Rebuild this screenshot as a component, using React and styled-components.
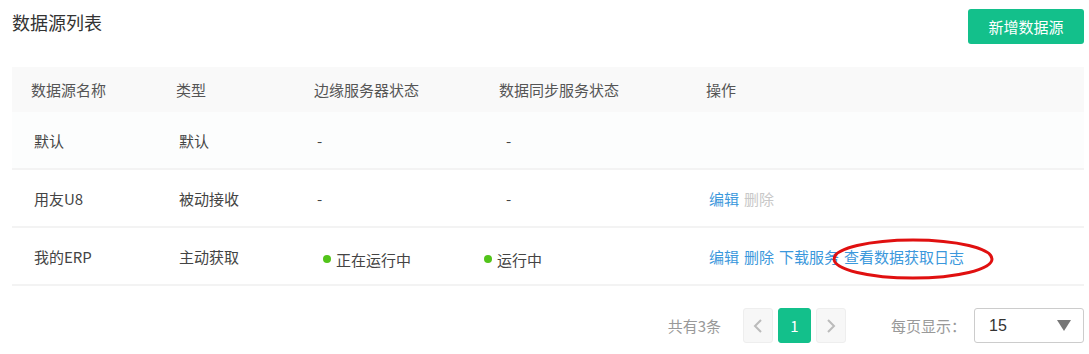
import React from 'react'
import styled, { createGlobalStyle } from 'styled-components'

const GlobalStyle = createGlobalStyle`
  body {
    margin: 0;
    background: #fff;
    font-family: "Noto Sans CJK SC", "Noto Sans", "Liberation Sans", sans-serif;
  }
`

const Page = styled.div`
  position: relative;
  width: 1089px;
  height: 354px;
  padding: 9px 5px 0 12px;
  box-sizing: border-box;
`

const TopBar = styled.div`
  display: flex;
  justify-content: space-between;
  align-items: flex-start;
  height: 35px;
`

const Title = styled.h2`
  margin: 0;
  font-size: 18px;
  font-weight: 400;
  line-height: 26px;
  color: #333;
`

const AddButton = styled.button`
  width: 116px;
  height: 35px;
  border: none;
  border-radius: 3px;
  background: #13c08b;
  color: #fff;
  font-family: inherit;
  font-size: 15px;
  cursor: pointer;
`

const Table = styled.div`
  margin-top: 23px;
`

const Row = styled.div`
  display: grid;
  grid-template-columns: 145px 138px 185px 207px 1fr;
  align-items: center;
  box-sizing: border-box;
  height: ${p => (p.$head ? '45px' : '58px')};
  background: ${p => (p.$head ? '#f9f9f9' : p.$tint ? '#fcfdfd' : '#fff')};
  border-bottom: ${p => (p.$head ? 'none' : '2px solid #f3f3f3')};
  font-size: 15px;
  color: ${p => (p.$head ? '#555' : '#444')};
`

const Cell = styled.div`
  padding-left: ${p => (p.$pad != null ? p.$pad : p.$head ? 19 : 22)}px;
  padding-top: ${p => (p.$low ? '6px' : '0')};
  white-space: nowrap;
  display: flex;
  align-items: center;
`

const Dot = styled.span`
  width: 8px;
  height: 8px;
  border-radius: 50%;
  background: #52c41a;
  margin: 0 5px 0 ${p => p.$offset || 0}px;
`

const Link = styled.a`
  color: ${p => (p.$disabled ? '#c8c8c8' : '#3b98dc')};
  margin-right: 5px;
  cursor: pointer;
`

const Mark = styled.svg`
  position: absolute;
  left: 830px;
  top: 236px;
  pointer-events: none;
`

const Pager = styled.div`
  display: flex;
  justify-content: flex-end;
  align-items: center;
  margin-top: 22px;
  font-size: 15px;
  color: #999;
`

const Total = styled.span`
  margin-right: 22px;
`

const PageBtn = styled.div`
  width: ${p => (p.$active ? '33px' : '30px')};
  height: 35px;
  margin-left: ${p => (p.$first ? 0 : 5)}px;
  box-sizing: border-box;
  border: 1px solid ${p => (p.$active ? '#13c08b' : '#eee')};
  border-radius: 3px;
  background: ${p => (p.$active ? '#13c08b' : '#f7f7f7')};
  color: ${p => (p.$active ? '#fff' : '#bbb')};
  display: flex;
  align-items: center;
  justify-content: center;
  font-size: 15px;
`

const SizeLabel = styled.span`
  margin-left: 45px;
  margin-right: 8px;
`

const Select = styled.div`
  width: 110px;
  height: 35px;
  box-sizing: border-box;
  border: 1px solid #ccc;
  border-radius: 3px;
  display: flex;
  align-items: center;
  justify-content: space-between;
  padding: 0 12px 0 14px;
  color: #333;
  font-family: "Liberation Sans", Arial, sans-serif;
  font-size: 16px;
`

const Caret = styled.span`
  width: 0;
  height: 0;
  border-left: 7px solid transparent;
  border-right: 7px solid transparent;
  border-top: 11px solid #777;
`

const Chevron = ({ dir }) => (
  <svg width="10" height="16" viewBox="0 0 10 16">
    <path
      d={dir === 'left' ? 'M8 2 L2 8 L8 14' : 'M2 2 L8 8 L2 14'}
      fill="none"
      stroke="#bbb"
      strokeWidth="2"
    />
  </svg>
)

export default function App() {
  return (
    <Page>
      <GlobalStyle />
      <TopBar>
        <Title>数据源列表</Title>
        <AddButton>新增数据源</AddButton>
      </TopBar>
      <Table>
        <Row $head>
          <Cell $head>数据源名称</Cell>
          <Cell $head>类型</Cell>
          <Cell $head>边缘服务器状态</Cell>
          <Cell $head>数据同步服务状态</Cell>
          <Cell $head>操作</Cell>
        </Row>
        <Row $tint>
          <Cell>默认</Cell>
          <Cell>默认</Cell>
          <Cell>-</Cell>
          <Cell $pad={26}>-</Cell>
          <Cell />
        </Row>
        <Row>
          <Cell>用友U8</Cell>
          <Cell>被动接收</Cell>
          <Cell>-</Cell>
          <Cell $pad={26}>-</Cell>
          <Cell>
            <Link>编辑</Link>
            <Link $disabled>删除</Link>
          </Cell>
        </Row>
        <Row>
          <Cell>我的ERP</Cell>
          <Cell>主动获取</Cell>
          <Cell $low><Dot $offset={6} />正在运行中</Cell>
          <Cell $low $pad={4}><Dot />运行中</Cell>
          <Cell>
            <Link>编辑</Link>
            <Link>删除</Link>
            <Link>下载服务</Link>
            <Link>查看数据获取日志</Link>
          </Cell>
        </Row>
      </Table>
      <Pager>
        <Total>共有3条</Total>
        <PageBtn $first><Chevron dir="left" /></PageBtn>
        <PageBtn $active>1</PageBtn>
        <PageBtn><Chevron dir="right" /></PageBtn>
        <SizeLabel>每页显示：</SizeLabel>
        <Select>
          15
          <Caret />
        </Select>
      </Pager>
      <Mark width="166" height="46" viewBox="0 0 166 46">
        <ellipse cx="83" cy="23" rx="79" ry="19" fill="none" stroke="#e01010" strokeWidth="3" />
      </Mark>
    </Page>
  )
}
